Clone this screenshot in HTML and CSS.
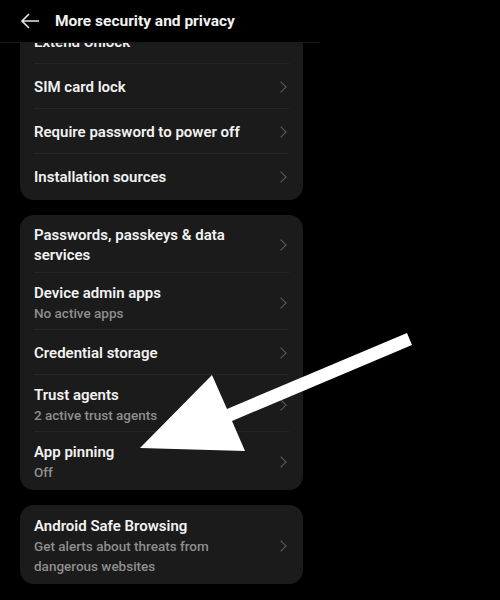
FILE: index.html
```html
<!DOCTYPE html>
<html>
<head>
    <meta charset="utf-8" />
    <title>More security and privacy</title>
    <link rel="stylesheet" href="styles.css">
</head>
<body>
<div class="screen"><!-- phone screen -->
    <div class="topbar">
        <svg class="back" width="20" height="16" viewBox="0 0 20 16"><path d="M19 8H2M9 1L2 8l7 7" fill="none" stroke="#e6e6e6" stroke-width="1.6"/></svg>
        <span class="title">More security and privacy</span>
    </div>
    <div class="scroller">
        <div class="inner">
            <div class="card">
                <div class="row"><div class="txt"><div class="name">Extend Unlock</div></div></div>
                <div class="row"><div class="txt"><div class="name">SIM card lock</div></div><i class="chev"></i></div>
                <div class="row"><div class="txt"><div class="name">Require password to power off</div></div><i class="chev"></i></div>
                <div class="row"><div class="txt"><div class="name">Installation sources</div></div><i class="chev"></i></div>
            </div>
            <div class="card">
                <div class="row"><div class="txt"><div class="name">Passwords, passkeys &amp; data services</div></div><i class="chev"></i></div>
                <div class="row two"><div class="txt"><div class="name">Device admin apps</div><div class="sub">No active apps</div></div><i class="chev"></i></div>
                <div class="row"><div class="txt"><div class="name">Credential storage</div></div><i class="chev"></i></div>
                <div class="row two"><div class="txt"><div class="name">Trust agents</div><div class="sub">2 active trust agents</div></div><i class="chev"></i></div>
                <div class="row two"><div class="txt"><div class="name">App pinning</div><div class="sub">Off</div></div><i class="chev"></i></div>
            </div>
            <div class="card">
                <div class="row tall"><div class="txt"><div class="name">Android Safe Browsing</div><div class="sub">Get alerts about threats from dangerous websites</div></div><i class="chev"></i></div>
            </div>
        </div>
    </div>
    <!-- pointer drawn over the screenshot -->
    <svg class="pointer" width="500" height="600" viewBox="0 0 500 600">
        <polygon points="140,448 212,375 227,409 407,333 412,345 232,421 245,451" fill="#fff"/>
    </svg>
</div>
</body>
</html>
```

FILE: styles.css
```css
html,body{margin:0;padding:0;background:#000;}
body{font-family:Roboto,"Noto Sans",sans-serif;color:#f2f2f2;}

.screen{position:relative;width:500px;height:600px;overflow:hidden;}
.topbar{display:flex;align-items:center;width:320px;height:42px;border-bottom:1px solid #1a1a1a;background:#000;position:relative;z-index:2;}
.back{margin-left:20px;margin-right:15px;}
.title{font-size:15.5px;font-weight:700;}

.scroller{height:557px;overflow:hidden;}
.inner{margin-top:-25px;padding-left:20px;width:283px;display:flex;flex-direction:column;gap:15px;}

.card{background:#1b1b1b;border-radius:14px;padding:1px 14px 2px;}
.row{display:flex;align-items:center;min-height:28px;padding:9px 0 7px;border-top:1px solid #262626;}
.row:first-child{border-top:none;}
.row.two{padding:10px 0 6px;}
.row.tall{padding:10px 0 6px;}
.txt{flex:1;padding-right:30px;}
.name{font-size:15px;font-weight:600;line-height:20px;}
.sub{font-size:13.5px;color:#8e8e8e;line-height:20px;font-weight:500;}
.chev{display:block;width:7px;height:7px;border-top:1.3px solid #5c5c5c;border-right:1.3px solid #5c5c5c;transform:rotate(45deg);margin-right:4px;}

.pointer{position:absolute;left:0;top:0;z-index:3;}
```
